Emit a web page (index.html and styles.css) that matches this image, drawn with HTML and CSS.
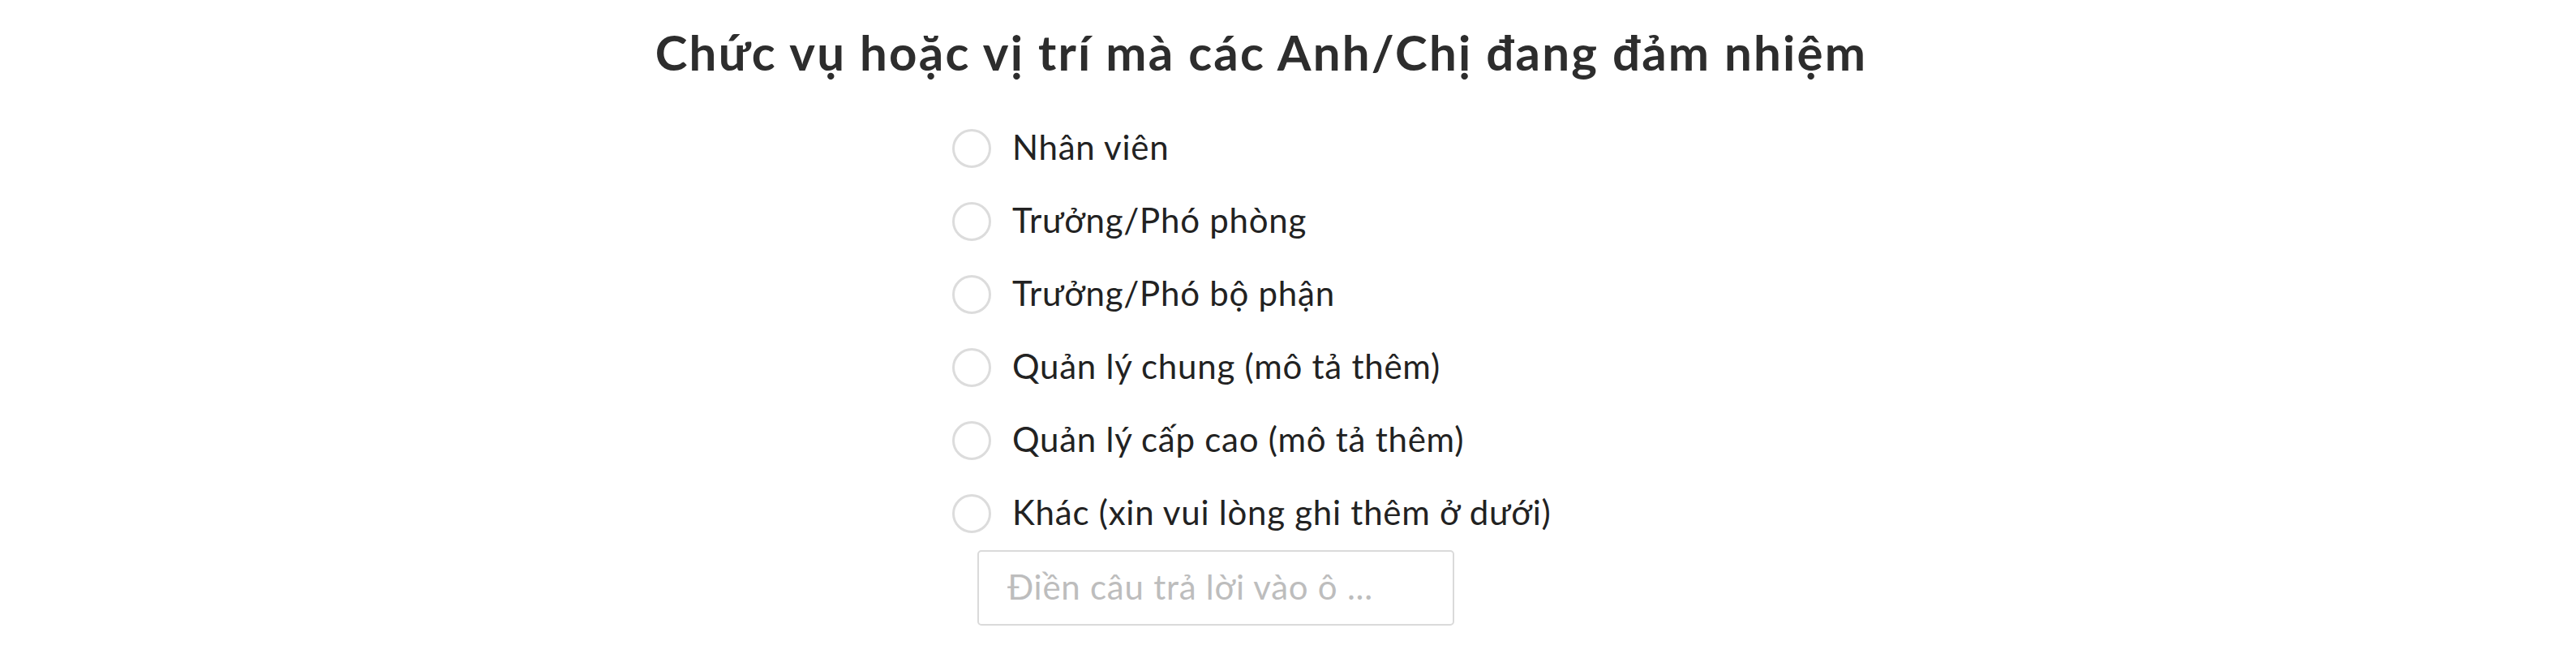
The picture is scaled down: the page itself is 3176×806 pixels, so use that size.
FILE: index.html
```html
<!DOCTYPE html>
<html lang="vi">
<head>
<meta charset="utf-8">
<title>Chức vụ</title>
<link rel="stylesheet" href="styles.css">
</head>
<body>
<main class="page">
  <h1 class="question">Chức vụ hoặc vị trí mà các Anh/Chị đang đảm nhiệm</h1>
  <div class="options">
    <label class="option"><span class="radio"></span><span class="label">Nhân viên</span></label>
    <label class="option"><span class="radio"></span><span class="label">Trưởng/Phó phòng</span></label>
    <label class="option"><span class="radio"></span><span class="label">Trưởng/Phó bộ phận</span></label>
    <label class="option"><span class="radio"></span><span class="label">Quản lý chung (mô tả thêm)</span></label>
    <label class="option"><span class="radio"></span><span class="label">Quản lý cấp cao (mô tả thêm)</span></label>
    <label class="option"><span class="radio"></span><span class="label">Khác (xin vui lòng ghi thêm ở dưới)</span></label>
    <input class="other-input" type="text" placeholder="Điền câu trả lời vào ô ...">
  </div>
</main>
</body>
</html>
```
FILE: styles.css
```css
html, body {
  margin: 0;
  padding: 0;
  background: #ffffff;
}
body {
  font-family: Lato, "Open Sans", sans-serif;
  color: #222222;
}
.page {
  padding: 24px 66px 0 0;
  display: flex;
  flex-direction: column;
  align-items: center;
}
.question {
  margin: 0;
  font-size: 60px;
  line-height: 80px;
  font-weight: 700;
  letter-spacing: 2.2px;
  color: #2d2d2d;
  text-align: center;
}
.options {
  width: 762px;
  margin-top: 34px;
  display: flex;
  flex-direction: column;
}
.option {
  height: 90px;
  display: flex;
  align-items: center;
  gap: 26px;
}
.radio {
  width: 48px;
  height: 48px;
  box-sizing: border-box;
  border: 3px solid #dcdcdc;
  border-radius: 50%;
  flex: none;
}
.label {
  font-size: 42px;
  line-height: 50px;
  letter-spacing: 0.75px;
  padding-bottom: 4px;
  color: #222222;
}
.other-input {
  margin: 0 0 0 31px;
  width: 588px;
  height: 93px;
  box-sizing: border-box;
  border: 2px solid #dadada;
  border-radius: 5px;
  padding: 0 0 4px 35px;
  font-family: Lato, "Open Sans", sans-serif;
  font-size: 42px;
  letter-spacing: 0.75px;
  color: #222222;
  background: #ffffff;
  outline: none;
}
.other-input::placeholder {
  color: #bdbdbd;
}
```
